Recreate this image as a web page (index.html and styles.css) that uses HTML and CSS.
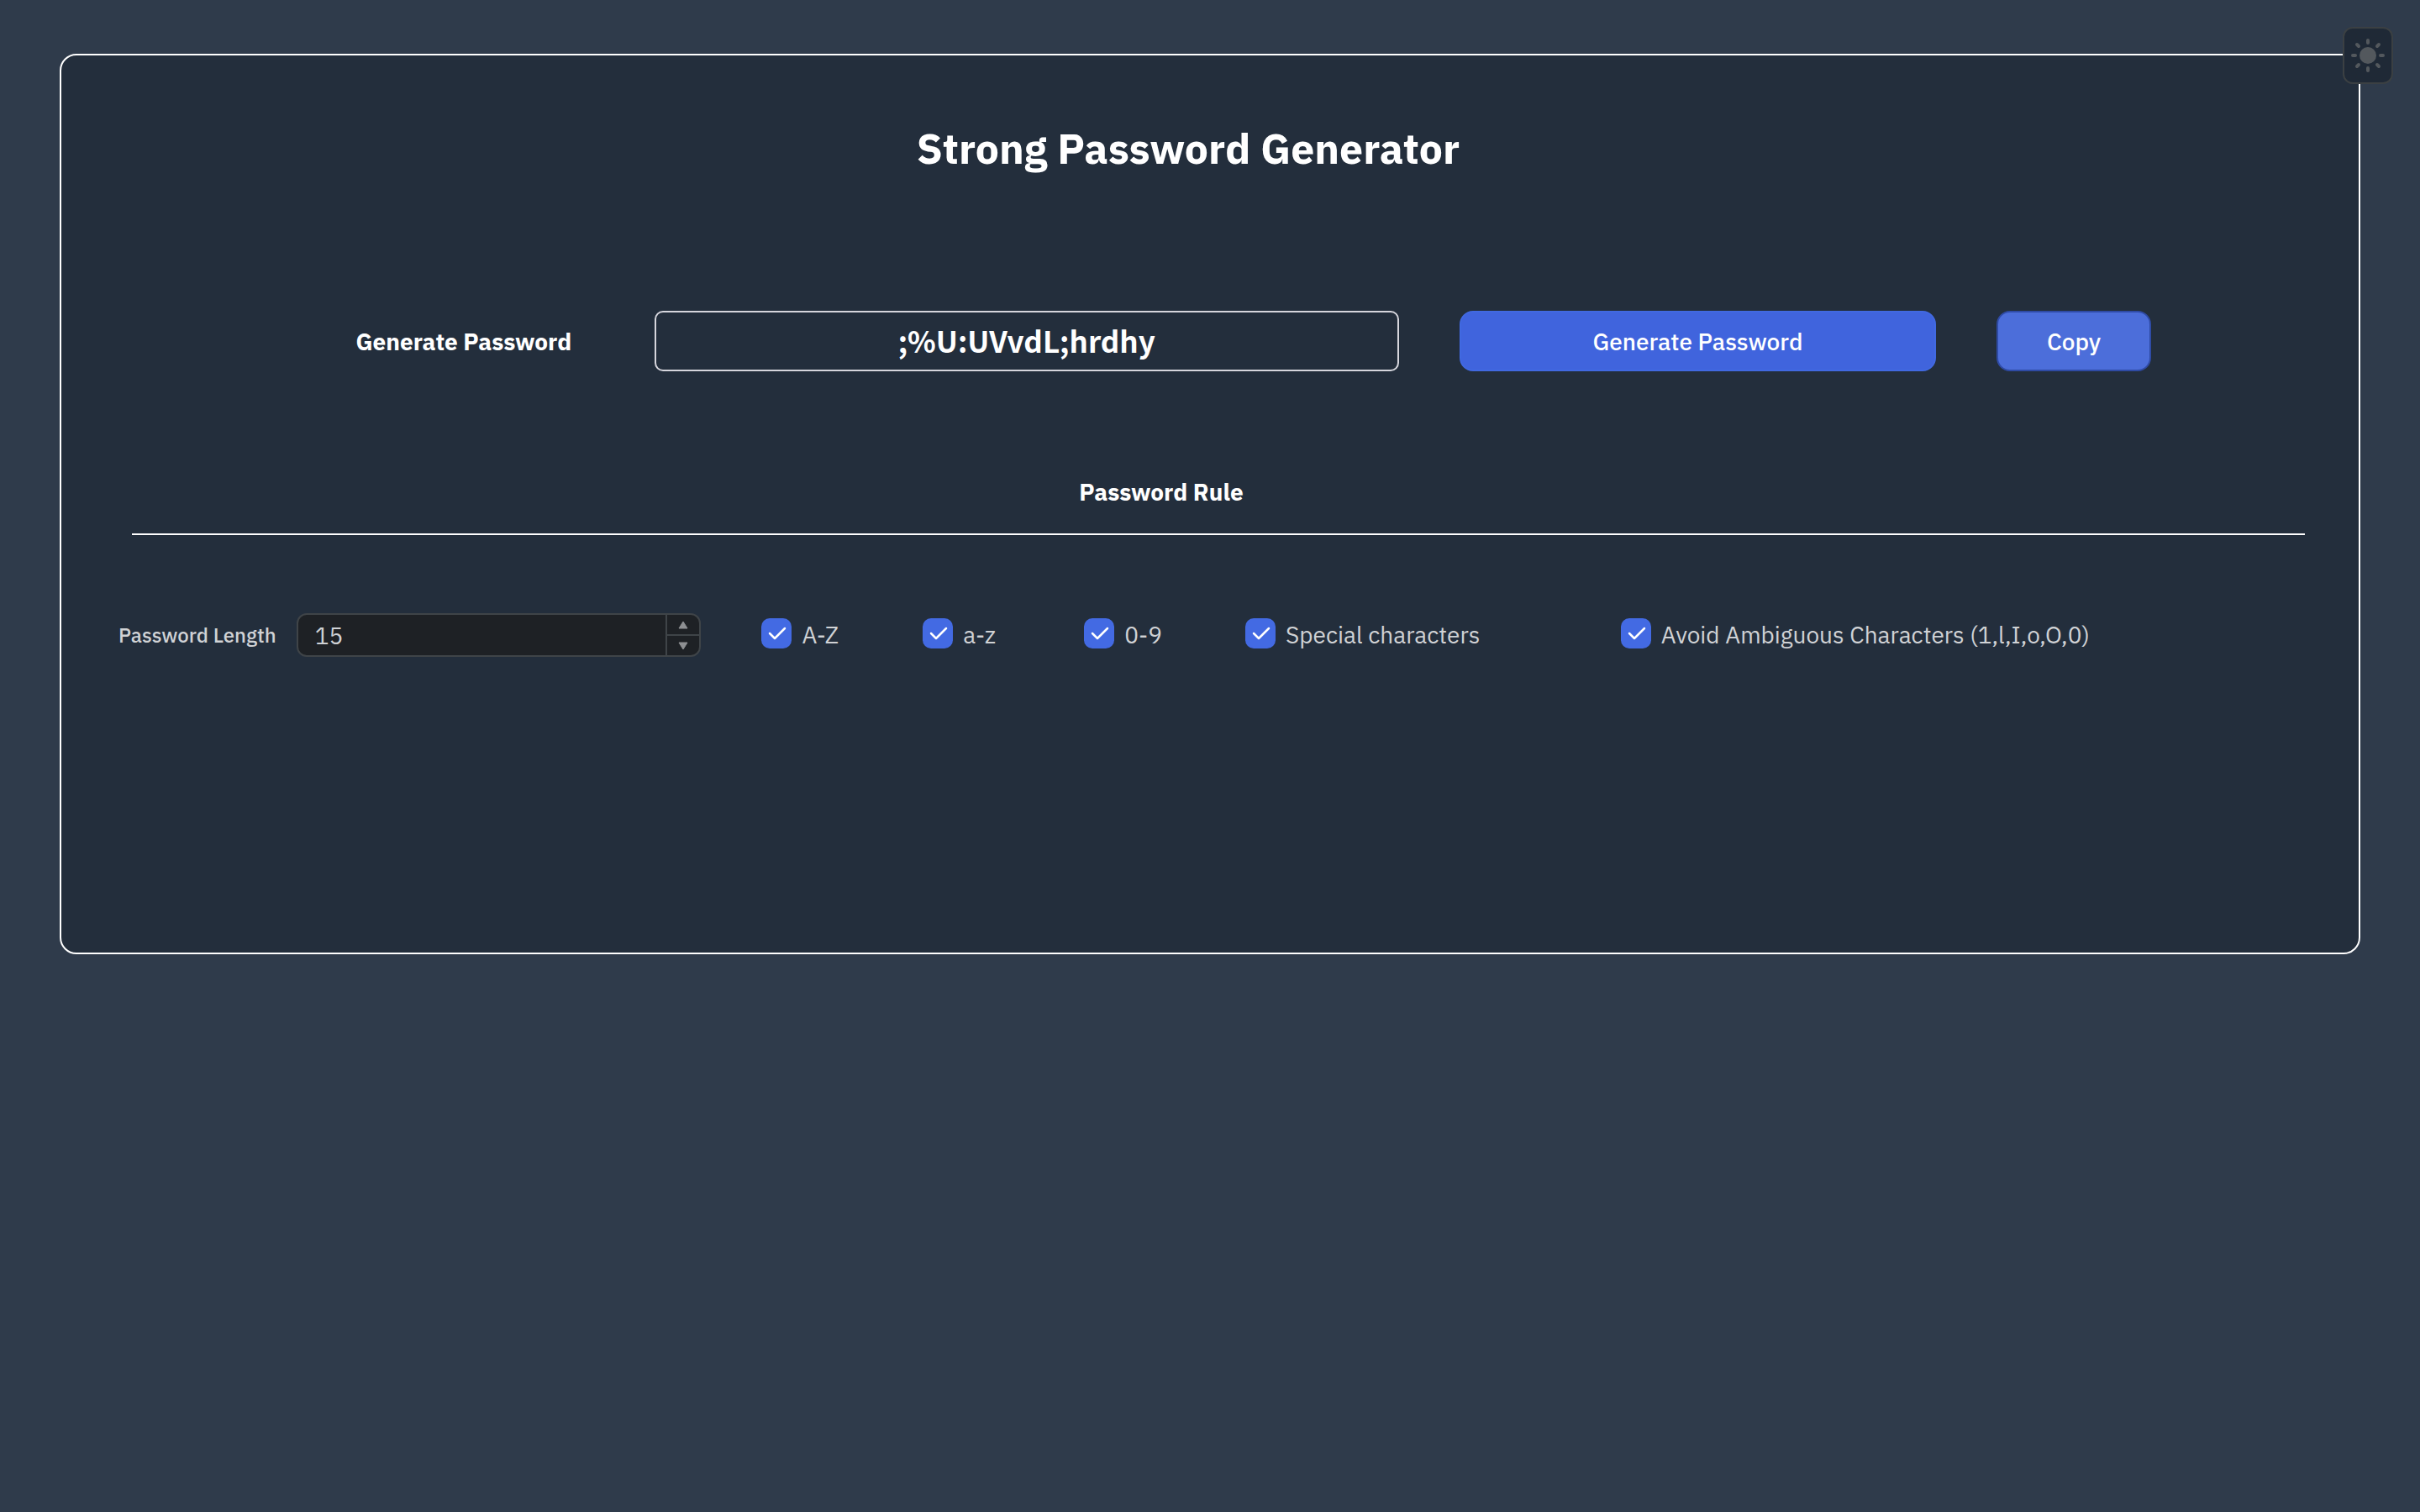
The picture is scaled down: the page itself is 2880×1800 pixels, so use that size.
FILE: index.html
```html
<!DOCTYPE html>
<html lang="en">
<head>
<meta charset="utf-8">
<meta name="viewport" content="width=device-width, initial-scale=1">
<title>Strong Password Generator</title>
<link rel="stylesheet" href="styles.css">
</head>
<body>
<button class="theme-toggle" type="button" aria-label="Toggle theme">
  <svg width="40" height="40" viewBox="0 0 40 40" aria-hidden="true">
    <circle cx="20" cy="20" r="10" fill="currentColor"/>
    <path d="M20 2v3M20 35v3M2 20h3M35 20h3M7 7l2 2M31 31l2 2M7 33l2-2M31 9l2-2" fill="none" stroke="currentColor" stroke-width="4" stroke-linecap="round"/>
  </svg>
</button>
<main class="card">
  <h1 class="title">Strong Password Generator</h1>
  <div class="generator">
    <label class="generator-label" for="password">Generate Password</label>
    <input class="password" id="password" type="text" value=";%U:UVvdL;hrdhy" readonly>
    <button class="button" type="button">Generate Password</button>
    <button class="button button-copy" type="button">Copy</button>
  </div>
  <h2 class="subtitle">Password Rule</h2>
  <hr class="divider">
  <div class="rules">
    <label class="length-label" for="length">Password Length</label>
    <div class="number">
      <input class="number-input" id="length" type="number" value="15">
      <div class="stepper">
        <button class="step" type="button" aria-label="Increase"><svg width="12" height="10" viewBox="0 0 12 10" aria-hidden="true"><path d="M6 1l5 8H1z" fill="currentColor" stroke="currentColor" stroke-linejoin="round"/></svg></button>
        <button class="step" type="button" aria-label="Decrease"><svg width="12" height="10" viewBox="0 0 12 10" aria-hidden="true"><path d="M6 9L1 1h10z" fill="currentColor" stroke="currentColor" stroke-linejoin="round"/></svg></button>
      </div>
    </div>
    <label class="check"><input type="checkbox" checked>A-Z</label>
    <label class="check"><input type="checkbox" checked>a-z</label>
    <label class="check"><input type="checkbox" checked>0-9</label>
    <label class="check"><input type="checkbox" checked>Special characters</label>
    <label class="check"><input type="checkbox" checked>Avoid Ambiguous Characters (1,l,I,o,O,0)</label>
  </div>
</main>
</body>
</html>
```
FILE: styles.css
```css
* {
  box-sizing: border-box;
}

body {
  margin: 0;
  min-height: 100vh;
  padding: 64px 71px;
  background: #2f3b4b;
  color: #fff;
  font-family: "IBM Plex Sans", "Noto Sans", sans-serif;
  font-size: 28px;
}

button,
input {
  margin: 0;
  font: inherit;
}

.theme-toggle {
  position: absolute;
  top: 32px;
  right: 32px;
  display: grid;
  place-items: center;
  width: 60px;
  height: 68px;
  padding: 0;
  border: 2px solid #3b4043;
  border-radius: 12px;
  background: #1f2936;
  color: #53585d;
}

.card {
  padding: 71px 64px 352px;
  border: 2px solid #fff;
  border-radius: 20px;
  background: #232e3c;
}

.title {
  margin: 0 52px 153px 0;
  font-size: 50px;
  font-weight: 700;
  line-height: 80px;
  text-align: center;
}

.generator {
  display: grid;
  grid-template-columns: 310fr 887fr 568fr 184fr;
  column-gap: 72px;
  padding: 0 183px 0 260px;
}

.generator-label {
  align-self: center;
  font-weight: 700;
  text-align: center;
  white-space: nowrap;
}

.password {
  width: 100%;
  height: 72px;
  padding: 0 12px 4px;
  border: 2px solid #d6d6dd;
  border-radius: 10px;
  background: transparent;
  color: #fff;
  font-family: "Noto Sans CJK SC", "Noto Sans", sans-serif;
  font-size: 35px;
  font-weight: 700;
  text-align: center;
}

.button {
  height: 72px;
  padding: 0;
  border: 2px solid #4169e1;
  border-radius: 16px;
  background: #4064dd;
  color: #fff;
  font-weight: 500;
}

.button-copy {
  border-color: #2f4ba5;
  background: #4c6eda;
}

.subtitle {
  margin: 120px 116px 0 0;
  font-size: 28px;
  font-weight: 700;
  line-height: 48px;
  text-align: center;
}

.divider {
  height: 2px;
  margin: 25px 0 93px 20px;
  border: 0;
  background: #fff;
}

.rules {
  display: grid;
  grid-template-columns: 188fr 434fr 120fr 120fr 120fr 375fr 815fr;
  column-gap: 72px;
  align-items: center;
  padding-left: 4px;
  color: #d0d2d5;
}

.length-label {
  font-size: 24px;
  font-weight: 500;
  white-space: nowrap;
}

.number {
  display: flex;
  height: 52px;
  margin-left: -48px;
  border: 2px solid #3f4448;
  border-radius: 12px;
  background: #1e2125;
  overflow: hidden;
}

.number-input {
  flex: 1;
  min-width: 0;
  padding: 0 20px;
  border: 0;
  background: transparent;
  color: inherit;
  appearance: textfield;
}

.number-input::-webkit-inner-spin-button {
  appearance: none;
}

.stepper {
  display: flex;
  flex-direction: column;
  width: 40px;
  border-left: 2px solid #3f4448;
}

.step {
  display: grid;
  flex: 1;
  place-items: center;
  padding: 0;
  border: 0;
  background: transparent;
  color: #8e9093;
}

.step + .step {
  border-top: 2px solid #3f4448;
}

.check {
  display: flex;
  gap: 12px;
  align-items: center;
  line-height: 36px;
  white-space: nowrap;
}

.check input {
  flex: none;
  width: 36px;
  height: 36px;
  margin-bottom: 4px;
  border-radius: 10px;
  appearance: none;
  background: #436ae3;
}

.check input:checked {
  background: #436ae3 url("data:image/svg+xml,%3Csvg xmlns='http://www.w3.org/2000/svg' viewBox='0 0 36 36'%3E%3Cpath d='M10 18l6 6L28 12' fill='none' stroke='white' stroke-width='2.5' stroke-linecap='round' stroke-linejoin='round'/%3E%3C/svg%3E");
}
```
